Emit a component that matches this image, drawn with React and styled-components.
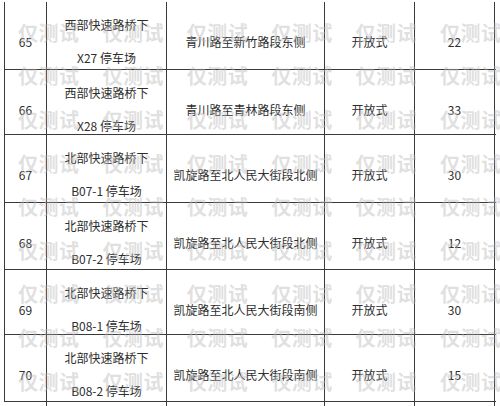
import React from 'react'
import styled, { createGlobalStyle } from 'styled-components'

const GlobalStyle = createGlobalStyle`
html,body{
    margin:0;
    padding:0;
    background:#fff;
}
body{
    font-family:"Noto Sans CJK SC","Noto Sans",sans-serif;
}
`

const Page = styled.div`
position:relative;
width:500px;
height:406px;
overflow:hidden;
box-sizing:border-box;
padding:2px 0 0 4px;
background:#fff;
`

const Table = styled.div`
width:491px;
border-left:1px solid #3a3a3a;
border-right:0;
`

const Row = styled.div`
display:grid;
grid-template-columns:42px 120px 158px 90px 80px;
height:${({$h})=>$h}px;
box-sizing:border-box;
border-bottom:1px solid #3a3a3a;
`

const Cell = styled.div`
display:flex;
flex-direction:column;
justify-content:center;
align-items:center;
text-align:center;
box-sizing:border-box;
border-right:1px solid #3a3a3a;
padding-top:6px;
font-size:12px;
line-height:33px;
color:#2e2e2e;
white-space:nowrap;
`

const Watermark = styled.div`
position:absolute;
inset:0;
pointer-events:none;
padding:11px 0 0 18px;
display:grid;
grid-template-columns:repeat(6,84.4px);
grid-auto-rows:43.6px;
align-items:center;
.mark{
    font-size:20px;
    font-weight:700;
    letter-spacing:0.5px;
    line-height:1;
    color:rgba(185,185,185,0.45);
    white-space:nowrap;
}
`

const rows = [
    { no:'65', name:['西部快速路桥下','X27 停车场'], road:'青川路至新竹路段东侧', type:'开放式', count:'22', h:68 },
    { no:'66', name:['西部快速路桥下','X28 停车场'], road:'青川路至青林路段东侧', type:'开放式', count:'33', h:65 },
    { no:'67', name:['北部快速路桥下','B07-1 停车场'], road:'凯旋路至北人民大街段北侧', type:'开放式', count:'30', h:68 },
    { no:'68', name:['北部快速路桥下','B07-2 停车场'], road:'凯旋路至北人民大街段北侧', type:'开放式', count:'12', h:67 },
    { no:'69', name:['北部快速路桥下','B08-1 停车场'], road:'凯旋路至北人民大街段南侧', type:'开放式', count:'30', h:65 },
    { no:'70', name:['北部快速路桥下','B08-2 停车场'], road:'凯旋路至北人民大街段南侧', type:'开放式', count:'15', h:67 },
]

const App = () => {
  return (
    <Page>
      <GlobalStyle/>
      <Table>
        {rows.map((r)=>(
          <Row key={r.no} $h={r.h}>
            <Cell>{r.no}</Cell>
            <Cell>
              {r.name.map((l)=><span key={l}>{l}</span>)}
            </Cell>
            <Cell>{r.road}</Cell>
            <Cell>{r.type}</Cell>
            <Cell>{r.count}</Cell>
          </Row>
        ))}
      </Table>
      <Watermark>
        {Array.from({length:54}).map((_,i)=>(
          <span className='mark' key={i}>仅测试</span>
        ))}
      </Watermark>
    </Page>
  )
}

export default App
